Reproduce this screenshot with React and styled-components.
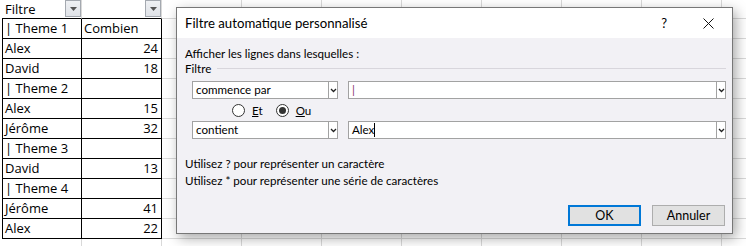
import React from 'react';
import styled, { createGlobalStyle } from 'styled-components';

const GlobalStyle = createGlobalStyle`
  html, body {
    margin: 0;
    padding: 0;
    background: #ffffff;
    overflow: hidden;
  }
  * {
    box-sizing: border-box;
  }
`;

const rows = [
  ['| Theme 1', 'Combien'],
  ['Alex', 24],
  ['David', 18],
  ['| Theme 2', ''],
  ['Alex', 15],
  ['Jérôme', 32],
  ['| Theme 3', ''],
  ['David', 13],
  ['| Theme 4', ''],
  ['Jérôme', 41],
  ['Alex', 22],
];

const EXTRA_COLS = 8;

const Chevron = () => (
  <svg width="7" height="5" viewBox="0 0 7 5">
    <polyline points="1,1 3.5,3.5 6,1" fill="none" stroke="#222" strokeWidth="1.3" />
  </svg>
);

const CloseIcon = () => (
  <svg width="11" height="11" viewBox="0 0 11 11">
    <line x1="0.5" y1="0.5" x2="10.5" y2="10.5" stroke="#111" strokeWidth="1" />
    <line x1="10.5" y1="0.5" x2="0.5" y2="10.5" stroke="#111" strokeWidth="1" />
  </svg>
);

const FilterButton = () => (
  <FilterBtn>
    <svg width="7" height="4" viewBox="0 0 7 4">
      <polygon points="0,0 7,0 3.5,4" fill="#555" />
    </svg>
  </FilterBtn>
);

const App = () => {
  const filler = (key) =>
    Array.from({ length: EXTRA_COLS }, (_, i) => <Cell key={`${key}-${i}`} />);

  return (
    <Page>
      <GlobalStyle />
      <Sheet>
        <HeaderCell>
          <span>Filtre</span>
          <FilterButton />
        </HeaderCell>
        <HeaderCell $end>
          <FilterButton />
        </HeaderCell>
        {filler('h')}
        {rows.map(([name, value], r) => (
          <React.Fragment key={r}>
            <TableCell $first>{name}</TableCell>
            <TableCell $right={typeof value === 'number'}>{value}</TableCell>
            {filler(r)}
          </React.Fragment>
        ))}
        <Cell />
        <Cell />
        {filler('last')}
      </Sheet>

      <Dialog>
        <TitleBar>
          <Title>Filtre automatique personnalisé</Title>
          <TitleTools>
            <HelpMark>?</HelpMark>
            <CloseIcon />
          </TitleTools>
        </TitleBar>
        <Body>
          <Line>Afficher les lignes dans lesquelles :</Line>
          <GroupHeader>
            <span>Filtre</span>
            <GroupRule />
          </GroupHeader>
          <ComboRow>
            <Combo $width={146}>
              <ComboText>commence par</ComboText>
              <ComboArrow><Chevron /></ComboArrow>
            </Combo>
            <Combo $grow>
              <ComboText $tint>|</ComboText>
              <ComboArrow><Chevron /></ComboArrow>
            </Combo>
          </ComboRow>
          <RadioRow>
            <RadioItem>
              <Radio />
              <span><u>E</u>t</span>
            </RadioItem>
            <RadioItem>
              <Radio $checked />
              <span><u>O</u>u</span>
            </RadioItem>
          </RadioRow>
          <ComboRow $tight>
            <Combo $width={146}>
              <ComboText>contient</ComboText>
              <ComboArrow><Chevron /></ComboArrow>
            </Combo>
            <Combo $grow>
              <ComboText>Alex<Caret /></ComboText>
              <ComboArrow><Chevron /></ComboArrow>
            </Combo>
          </ComboRow>
          <Hints>
            <Hint>Utilisez ? pour représenter un caractère</Hint>
            <Hint>Utilisez * pour représenter une série de caractères</Hint>
          </Hints>
          <Actions>
            <Button $primary>OK</Button>
            <Button>Annuler</Button>
          </Actions>
        </Body>
      </Dialog>
    </Page>
  );
};

const Page = styled.div`
  position: relative;
  width: 746px;
  height: 246px;
  overflow: hidden;
  background: #ffffff;
`;

const Sheet = styled.div`
  display: grid;
  grid-template-columns: repeat(${2 + EXTRA_COLS}, 80px);
  grid-template-rows: 19px repeat(${rows.length + 1}, 20px);
  padding-left: 2px;
  width: 820px;
  font-family: 'Open Sans', 'Noto Sans', sans-serif;
  font-size: 13px;
  color: #000;
`;

const Cell = styled.div`
  border-right: 1px solid #d9d9d9;
  border-bottom: 1px solid #d9d9d9;
`;

const HeaderCell = styled.div`
  display: flex;
  align-items: flex-start;
  justify-content: ${(p) => (p.$end ? 'flex-end' : 'space-between')};
  padding-left: 3px;
  border-right: 1px solid #d9d9d9;
  border-bottom: 1px solid #000;
  line-height: 18px;
`;

const FilterBtn = styled.div`
  width: 16px;
  height: 17px;
  display: flex;
  align-items: center;
  justify-content: center;
  background: linear-gradient(#eef0f3, #dfe2e7);
  border: 1px solid #a4a9b0;
`;

const TableCell = styled.div`
  display: flex;
  align-items: flex-end;
  justify-content: ${(p) => (p.$right ? 'flex-end' : 'flex-start')};
  padding: 0 3px 1px 2px;
  border-right: 1px solid #000;
  border-bottom: 1px solid #000;
  border-left: ${(p) => (p.$first ? '1px solid #000' : 'none')};
  line-height: 18px;
  white-space: nowrap;
`;

const Dialog = styled.div`
  position: absolute;
  left: 176px;
  top: 7px;
  width: 557px;
  height: 227px;
  display: flex;
  flex-direction: column;
  background: #f2f1f5;
  border: 1px solid #777;
  box-shadow: 3px 4px 12px rgba(0, 0, 0, 0.35);
  font-family: Lato, 'Noto Sans', sans-serif;
  font-size: 11.6px;
  color: #000;
`;

const TitleBar = styled.div`
  height: 30px;
  flex-shrink: 0;
  display: flex;
  align-items: center;
  justify-content: space-between;
  padding: 0 18px 0 8px;
  background: #ffffff;
`;

const Title = styled.span`
  font-size: 13.2px;
`;

const TitleTools = styled.div`
  display: flex;
  align-items: center;
  gap: 36px;
`;

const HelpMark = styled.span`
  font-size: 13px;
`;

const Body = styled.div`
  flex: 1;
  display: flex;
  flex-direction: column;
  padding: 8px 6px 0 8px;
`;

const Line = styled.div`
  line-height: 15px;
`;

const GroupHeader = styled.div`
  display: flex;
  align-items: center;
  line-height: 15px;
`;

const GroupRule = styled.div`
  flex: 1;
  height: 1px;
  margin-left: 6px;
  background: #d8d6dc;
`;

const ComboRow = styled.div`
  display: flex;
  gap: 10px;
  margin-top: ${(p) => (p.$tight ? '0' : '5px')};
  padding-left: 7px;
`;

const Combo = styled.div`
  display: flex;
  height: 18px;
  width: ${(p) => (p.$width ? `${p.$width}px` : 'auto')};
  flex: ${(p) => (p.$grow ? '1' : 'none')};
  background: #ffffff;
  border: 1px solid #a2a2a2;
`;

const ComboText = styled.div`
  flex: 1;
  display: flex;
  align-items: center;
  padding-left: 3px;
  line-height: 16px;
  color: ${(p) => (p.$tint ? '#8a3170' : '#000')};
`;

const Caret = styled.span`
  display: inline-block;
  width: 1px;
  height: 14px;
  background: #000;
`;

const ComboArrow = styled.div`
  width: 9px;
  display: flex;
  align-items: center;
  justify-content: center;
  border-left: 1px solid #a2a2a2;
`;

const RadioRow = styled.div`
  display: flex;
  align-items: center;
  gap: 13px;
  height: 22px;
  padding-left: 47px;
`;

const RadioItem = styled.label`
  display: flex;
  align-items: center;
  gap: 7px;
`;

const Radio = styled.span`
  position: relative;
  width: 13px;
  height: 13px;
  border-radius: 50%;
  border: 1px solid #333;
  background: #fff;
  &::after {
    content: '';
    position: absolute;
    inset: 2px;
    border-radius: 50%;
    background: #333;
    display: ${(p) => (p.$checked ? 'block' : 'none')};
  }
`;

const Hints = styled.div`
  margin-top: 16px;
`;

const Hint = styled.div`
  line-height: 17px;
`;

const Actions = styled.div`
  display: flex;
  justify-content: flex-end;
  gap: 11px;
  margin-top: 16px;
  padding-right: 1px;
`;

const Button = styled.button`
  width: 73px;
  height: 21px;
  padding: 0;
  font: inherit;
  font-size: 12.5px;
  color: #000;
  background: #e1e1e1;
  border: ${(p) => (p.$primary ? '2px solid #0078d7' : '1px solid #adadad')};
`;

export default App;
